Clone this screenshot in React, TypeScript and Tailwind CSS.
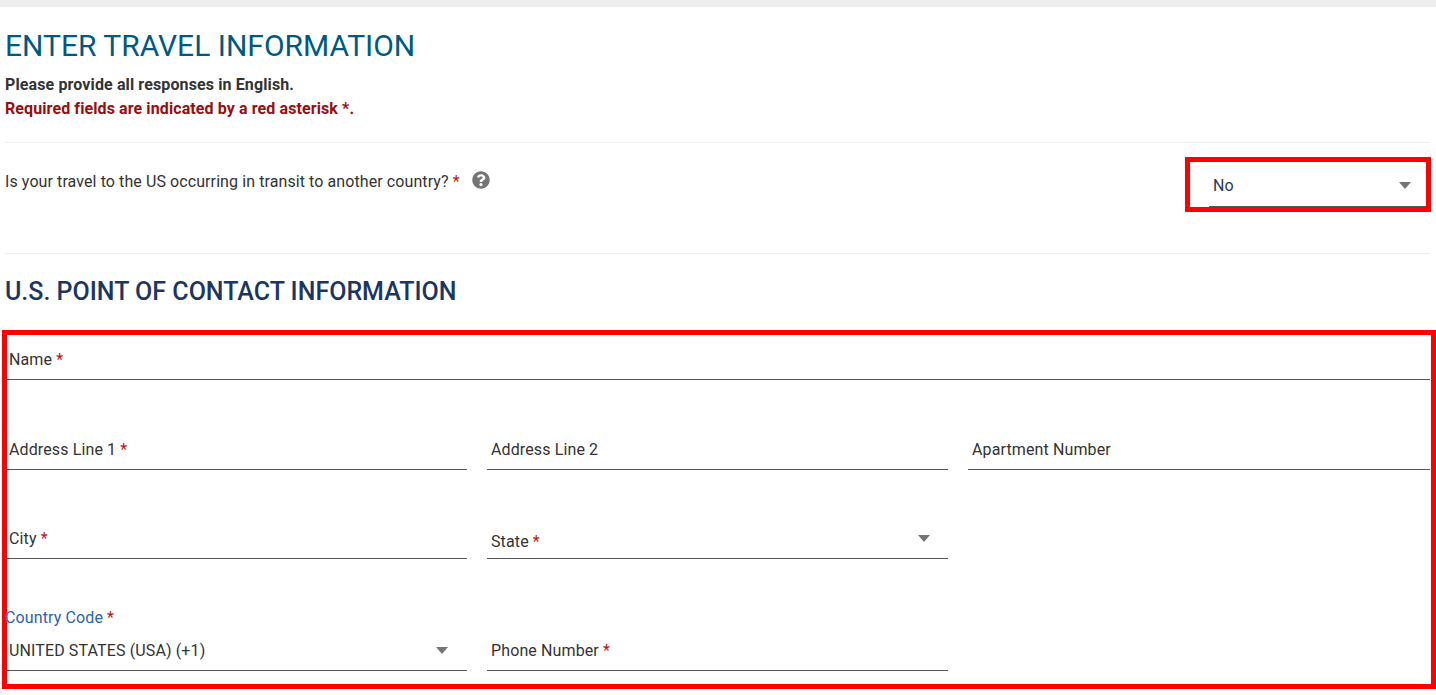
import { FaQuestionCircle } from 'react-icons/fa';

const Star = () => <span className="text-[#c41212]"> *</span>;

function Caret({ className = '' }: { className?: string }) {
  return <span className={`w-0 h-0 border-l-[6px] border-r-[6px] border-t-[7px] border-l-transparent border-r-transparent border-t-[#757575] ${className}`} />;
}

function Field({ label, req, pl = 'pl-[4px]' }: { label: string; req?: boolean; pl?: string }) {
  return (
    <div className={`flex items-end h-full border-b border-[#555] pb-[7px] ${pl}`}>
      <span className="text-[16px] leading-[24px] tracking-[0.12px] text-[#333]">
        {label}
        {req && <Star />}
      </span>
    </div>
  );
}

export default function App() {
  return (
    <div className="w-[1436px] h-[695px] overflow-hidden bg-white font-['Roboto',sans-serif] text-[#333]">
      <div className="h-[7px] bg-[#eeeeee]" />

      <div className="pl-[5px] pr-[5px]">
        <h1 className="mt-[21px] text-[30px] leading-[36px] text-[#005a7f]">ENTER TRAVEL INFORMATION</h1>
        <p className="mt-[9px] text-[16px] leading-[24px] font-bold tracking-[0.12px]">Please provide all responses in English.</p>
        <p className="text-[16px] leading-[24px] font-bold tracking-[0.1px] text-[#9b0d0d]">Required fields are indicated by a red asterisk *.</p>
        <div className="mt-[21px] mr-px border-t border-[#eeeeee]" />

        {/* Transit question */}
        <div className="mt-[14px] flex justify-between">
          <div className="mt-[13px] flex items-start">
            <span className="text-[16px] leading-[24px] tracking-[0.09px]">
              Is your travel to the US occurring in transit to another country?<Star />
            </span>
            <FaQuestionCircle className="ml-[12px] mt-px text-[18px] text-[#757575]" />
          </div>
          <div className="w-[246px] h-[55px] border-[5px] border-[#ff0000] pl-[19px]">
            <div className="h-full flex items-center justify-between border-b border-[#555] pt-[4px] pl-[4px] pr-[15px]">
              <span className="text-[16px] leading-[24px] tracking-[0.12px] text-[#2b3a55]">No</span>
              <Caret className="mb-[2px]" />
            </div>
          </div>
        </div>
        <div className="mt-[41px] mr-px border-t border-[#eeeeee]" />

        <h2 className="mt-[22px] text-[25px] leading-[32px] font-medium text-[#1c3664]">U.S. POINT OF CONTACT INFORMATION</h2>
      </div>

      {/* Contact form */}
      <div className="mt-[22px] ml-[2px] w-[1434px] h-[359px] border-[5px] border-[#ff0000]">
        <div className="w-[1423px]">
          <div className="h-[45px]">
            <Field label="Name" req pl="pl-[2px]" />
          </div>
          <div className="mt-[45px] h-[45px] grid grid-cols-[460px_461px_462px] gap-x-[20px]">
            <Field label="Address Line 1" req pl="pl-[2px]" />
            <Field label="Address Line 2" />
            <Field label="Apartment Number" />
          </div>
          <div className="mt-[44px] h-[45px] grid grid-cols-[460px_461px_462px] gap-x-[20px]">
            <Field label="City" req pl="pl-[2px]" />
            <div className="relative h-full border-b border-[#555] flex items-end pb-[4px] pl-[4px]">
              <span className="text-[16px] leading-[24px] tracking-[0.12px]">State<Star /></span>
              <Caret className="absolute right-[18px] top-[21px]" />
            </div>
          </div>
          <div className="mt-[43px] h-[69px] grid grid-cols-[460px_461px_462px] gap-x-[20px]">
            <div className="h-full flex flex-col pt-[4px]">
              <span className="-ml-[2px] text-[16px] leading-[24px] tracking-[0.12px] text-[#2c62ad]">Country Code<Star /></span>
              <div className="flex-1 flex items-end justify-between border-b border-[#555] pb-[7px] pl-[2px] pr-[19px]">
                <span className="text-[16px] leading-[24px] tracking-[0.12px]">UNITED STATES (USA) (+1)</span>
                <Caret className="mb-[9px]" />
              </div>
            </div>
            <Field label="Phone Number" req />
          </div>
        </div>
      </div>
    </div>
  );
}
